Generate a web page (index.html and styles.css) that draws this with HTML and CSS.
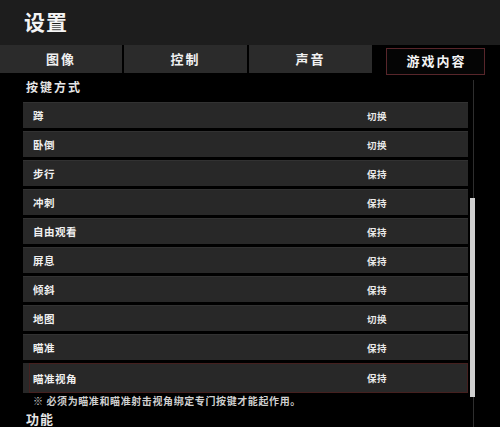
FILE: index.html
```html
<!DOCTYPE html>
<html lang="zh">
<head>
<meta charset="utf-8">
<link rel="stylesheet" href="styles.css">
</head>
<body>
<div class="header"><h1 class="title">设置</h1></div>
<div class="tabs">
  <div class="tab">图像</div>
  <div class="tab">控制</div>
  <div class="tab">声音</div>
  <div class="tab-area"><div class="tab-active">游戏内容</div></div>
</div>
<div class="body">
  <div class="main">
    <div class="section">按键方式</div>
    <div class="row"><span class="label">蹲</span><span class="value">切换</span></div>
    <div class="row"><span class="label">卧倒</span><span class="value">切换</span></div>
    <div class="row"><span class="label">步行</span><span class="value">保持</span></div>
    <div class="row"><span class="label">冲刺</span><span class="value">保持</span></div>
    <div class="row"><span class="label">自由观看</span><span class="value">保持</span></div>
    <div class="row"><span class="label">屏息</span><span class="value">保持</span></div>
    <div class="row"><span class="label">倾斜</span><span class="value">保持</span></div>
    <div class="row"><span class="label">地图</span><span class="value">切换</span></div>
    <div class="row"><span class="label">瞄准</span><span class="value">保持</span></div>
    <div class="row row-selected"><div class="sel"><span class="label">瞄准视角</span><span class="value">保持</span></div></div>
    <div class="note">※ 必须为瞄准和瞄准射击视角绑定专门按键才能起作用。</div>
    <div class="section section-2">功能</div>
  </div>
  <div class="scrollbar"><div class="thumb"></div></div>
</div>
</body>
</html>
```
FILE: styles.css
```css
* { box-sizing: border-box; }
html, body { margin: 0; padding: 0; }
body {
  width: 500px;
  height: 427px;
  overflow: hidden;
  background: #000;
  color: #f2f2f2;
  font-family: "Noto Sans CJK SC", "Noto Sans", sans-serif;
  font-weight: 700;
}
.header {
  height: 45px;
  background: #1d1d1d;
  padding-left: 24px;
}
.title {
  margin: 0;
  font-size: 21px;
  line-height: 43px;
  font-weight: 700;
  letter-spacing: 1px;
  color: #f4f4f4;
}
.tabs {
  display: flex;
  height: 28px;
  gap: 2px;
  background: #000;
}
.tab {
  width: 123px;
  background: #2b2b2b;
  text-align: center;
  font-size: 13px;
  line-height: 28px;
  letter-spacing: 2px;
  color: #f0f0f0;
}
.tab:first-child { width: 122px; }
.tab-area {
  flex: 1;
  padding-left: 12px;
  padding-top: 3px;
}
.tab-active {
  width: 99px;
  height: 27px;
  border: 1px solid #58262b;
  background: #050505;
  text-align: center;
  font-size: 13px;
  line-height: 24px;
  letter-spacing: 2px;
  padding-left: 2px;
  color: #f4f4f4;
}
.body {
  display: flex;
}
.main {
  width: 468px;
  padding-left: 23px;
}
.section {
  height: 29px;
  line-height: 28px;
  padding-left: 3px;
  font-size: 12px;
  letter-spacing: 2px;
  color: #e6e6e6;
}
.row {
  height: 26px;
  margin-bottom: 3px;
  background: #282828;
  border-top: 1px solid #323232;
  display: grid;
  grid-template-columns: 344px 1fr;
  align-items: center;
}
.label {
  padding-left: 10px;
  font-size: 10.5px;
  letter-spacing: 0.5px;
  color: #f0f0f0;
}
.value {
  font-size: 9.5px;
  letter-spacing: 0.5px;
  color: #eaeaea;
}
.row-selected {
  height: 30px;
  margin-bottom: 0;
  display: block;
  border-top: none;
}
.sel {
  margin-left: 6px;
  height: 30px;
  border: 1px solid #45201f;
  display: grid;
  grid-template-columns: 337px 1fr;
  align-items: center;
}
.sel .label { padding-left: 3px; }
.note {
  padding-left: 10px;
  font-size: 10px;
  line-height: 15px;
  letter-spacing: 0.6px;
  color: #cfcfcf;
}
.section-2 {
  height: 20px;
  line-height: 22px;
  font-size: 13px;
  letter-spacing: 1px;
}
.scrollbar {
  width: 6px;
  margin-left: 2px;
  margin-top: 7px;
  padding-top: 118px;
  background: linear-gradient(to right, transparent 3px, #2e2e2e 3px, #2e2e2e 4px, transparent 4px);
}
.thumb {
  width: 5px;
  height: 199px;
  background: #cfcfcf;
}
```
